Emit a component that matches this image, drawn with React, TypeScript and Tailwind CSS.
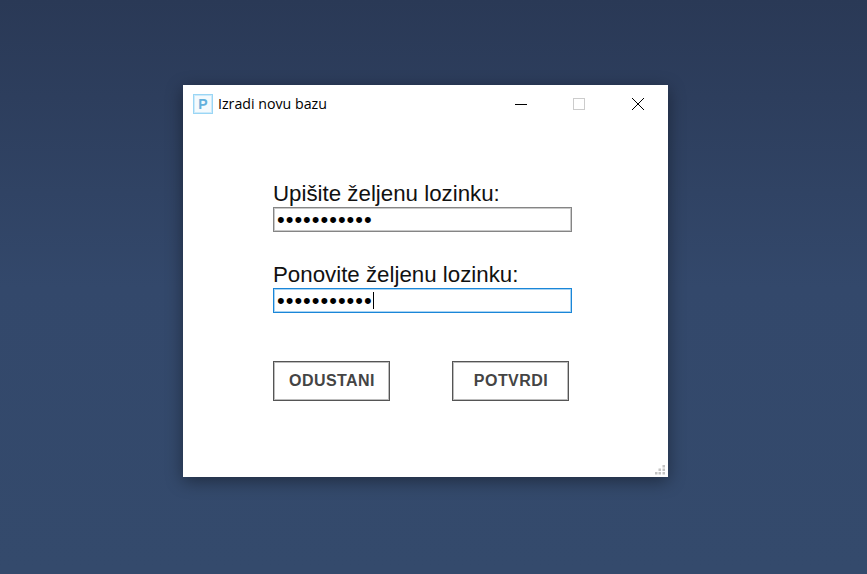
function PasswordField({ focused }: { focused?: boolean }) {
  return (
    <div
      className={`flex items-center h-[25px] w-[299px] border pl-[3px] bg-white ${
        focused
          ? "border-[#1a86d8] shadow-[inset_0_0_0_1px_#a9d4f3]"
          : "border-[#858585] shadow-[inset_0_0_0_1px_#c9c9c9]"
      }`}
    >
      <span className="text-[22px] leading-[21px] tracking-[1px] text-black font-['Liberation_Sans',sans-serif]">
        •••••••••••
      </span>
      {focused && <span className="w-px h-[17px] bg-black" />}
    </div>
  );
}

function DialogButton({ label, width }: { label: string; width: string }) {
  return (
    <button
      className={`h-[40px] ${width} border border-[#555555] shadow-[inset_0_0_0_1px_#bdbdbd] bg-white pl-[1px] text-[16px] tracking-[0.45px] font-bold text-[#444444] font-['Liberation_Sans',sans-serif]`}
    >
      {label}
    </button>
  );
}

export default function App() {
  return (
    <div className="h-[574px] w-[867px] overflow-hidden pl-[183px] pt-[85px] bg-gradient-to-b from-[#2a3956] via-[#33486b] to-[#344a6c]">
      <div className="relative flex h-[392px] w-[485px] flex-col bg-white shadow-[0_4px_16px_rgba(0,0,0,0.4)]">
        <div className="flex h-[38px] items-center pl-[10px]">
          <div className="flex h-[20px] w-[20px] items-center justify-center border border-[#9ad6f5] shadow-[inset_0_0_0_1px_#cdeafa] bg-[#f4fafd] text-[14px] font-bold leading-none text-[#62b0dc] font-['Liberation_Sans',sans-serif]">
            P
          </div>
          <span className="ml-[5px] mb-[1px] text-[14.2px] text-black font-['Open_Sans',sans-serif]">
            Izradi novu bazu
          </span>
          <div className="ml-auto flex items-center pr-[23px]">
            <svg width="14" height="14" viewBox="0 0 14 14" className="mr-[44px]">
              <path d="M1 7.5h12" stroke="#000" strokeWidth="1" />
            </svg>
            <svg width="14" height="14" viewBox="0 0 14 14" className="mr-[45px]">
              <rect x="1.5" y="1.5" width="11" height="11" fill="none" stroke="#cccccc" />
            </svg>
            <svg width="14" height="14" viewBox="0 0 14 14">
              <path d="M1 1l12 12M13 1L1 13" stroke="#000" strokeWidth="1" />
            </svg>
          </div>
        </div>

        <div className="flex flex-col pl-[90px] pt-[57px]">
          <label className="text-[22.3px] leading-[27px] text-[#111111] font-['Liberation_Sans',sans-serif]">
            Upišite željenu lozinku:
          </label>
          <PasswordField />
          <label className="mt-[29px] text-[22.3px] leading-[27px] text-[#111111] font-['Liberation_Sans',sans-serif]">
            Ponovite željenu lozinku:
          </label>
          <PasswordField focused />
          <div className="mt-[48px] flex gap-[62px]">
            <DialogButton label="ODUSTANI" width="w-[117px]" />
            <DialogButton label="POTVRDI" width="w-[117px]" />
          </div>
        </div>

        <svg width="12" height="12" viewBox="0 0 12 12" className="absolute bottom-[1px] right-[2px]" fill="#c4c4c4">
          <rect x="8.5" y="1" width="2.5" height="2.5" />
          <rect x="4.5" y="4.5" width="2.5" height="2.5" />
          <rect x="8.5" y="4.5" width="2.5" height="2.5" />
          <rect x="1" y="8" width="2.5" height="2.5" />
          <rect x="4.5" y="8" width="2.5" height="2.5" />
          <rect x="8.5" y="8" width="2.5" height="2.5" />
        </svg>
      </div>
    </div>
  );
}
